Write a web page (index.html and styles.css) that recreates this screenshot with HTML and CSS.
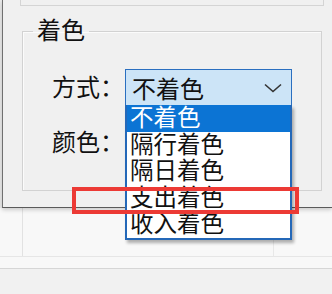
FILE: index.html
```html
<!DOCTYPE html>
<html lang="zh-CN">
<head>
    <meta charset="UTF-8" />
    <title>着色</title>
    <link rel="stylesheet" href="styles.css">
</head>
<body>
    <div class="dialog">
        <div class="prev-group"></div>
        <fieldset class="group">
            <legend>着色</legend>
            <div class="row">
                <span class="label">方式：</span>
                <div class="combo">
                    <span>不着色</span>
                    <svg class="chevron" width="18" height="10" viewBox="0 0 18 10">
                        <path d="M1 1.5 L9 8.5 L17 1.5" fill="none" stroke="#333" stroke-width="1.6"/>
                    </svg>
                </div>
            </div>
            <div class="row">
                <span class="label">颜色：</span>
                <div class="combo plain"></div>
            </div>
        </fieldset>
    </div>

    <div class="sheet">
        <div class="cells">
            <div class="cell first"></div>
            <div class="cell mid"></div>
            <div class="cell"></div>
        </div>
        <div class="gap"></div>
        <div class="footer"></div>
    </div>

    <ul class="dropdown">
        <li class="active">不着色</li>
        <li>隔行着色</li>
        <li>隔日着色</li>
        <li>支出着色</li>
        <li>收入着色</li>
    </ul>

    <div class="mark"></div>
</body>
</html>
```

FILE: styles.css
```css
body {
    margin: 0;
    width: 332px;
    height: 294px;
    overflow: hidden;
    position: relative;
    background: #e9e9e9;
    font-family: "Liberation Sans", "Noto Sans CJK SC", sans-serif;
    color: #111;
}
.dialog {
    margin-left: 2px;
    height: 208px;
    box-sizing: border-box;
    background: #f0f0f0;
    border-left: 1px solid #707070;
    border-bottom: 1px solid #5a5a5a;
    box-shadow: 0 2px 4px rgba(0, 0, 0, 0.18);
    position: relative;
    z-index: 1;
}
.prev-group {
    margin-left: 17px;
    width: 302px;
    height: 5px;
    border: 1px solid #d4d4d4;
    border-top: none;
}
.group {
    margin: 12px 0 0 19px;
    width: 300px;
    height: 173px;
    box-sizing: border-box;
    padding: 0;
    border: 1px solid #d2d2d2;
    box-shadow: inset 1px 1px 0 #fbfbfb;
}
.group legend {
    margin-left: 10px;
    padding: 0 4px;
    font-size: 24px;
    line-height: 26px;
}
.row {
    display: flex;
    align-items: center;
    margin-top: 25px;
    padding-left: 29px;
}
.row + .row {
    margin-top: 18px;
}
.label {
    width: 73px;
    font-size: 24px;
    line-height: 26px;
}
.combo {
    width: 167px;
    height: 37px;
    box-sizing: border-box;
    display: flex;
    align-items: center;
    justify-content: space-between;
    padding: 0 8px 0 6px;
    background: #cce4f7;
    border: 1px solid #2a6fc0;
    font-size: 24px;
}
.combo.plain {
    background: #fff;
    border-color: #9a9a9a;
}
.chevron {
    margin-right: 1px;
}
.sheet {
    background: #f8f8f8;
    height: 86px;
}
.cells {
    display: flex;
    height: 48px;
    border-bottom: 1px solid #e6e6e6;
}
.cell.first {
    width: 22px;
    border-right: 1px solid #e2e2e2;
}
.cell.mid {
    width: 250px;
    border-right: 1px solid #e8e8e8;
}
.gap {
    height: 11px;
    border-bottom: 1px solid #d6d6d6;
}
.footer {
    height: 26px;
    background: #f1f1f1;
}
.dropdown {
    position: absolute;
    left: 125px;
    top: 105px;
    width: 167px;
    margin: 0;
    padding: 0;
    list-style: none;
    box-sizing: border-box;
    background: #fff;
    border: 2px solid #2468b8;
    border-top: none;
    box-shadow: 2px 3px 3px rgba(0, 0, 0, 0.3);
    z-index: 2;
    font-size: 23.5px;
}
.dropdown li {
    height: 26.5px;
    line-height: 26px;
    padding-left: 3px;
}
.dropdown li.active {
    background: #0c74d4;
    color: #fff;
}
.mark {
    position: absolute;
    left: 72px;
    top: 187px;
    width: 227px;
    height: 27px;
    box-sizing: border-box;
    border: 4px solid #ec3a35;
    z-index: 3;
}
```
